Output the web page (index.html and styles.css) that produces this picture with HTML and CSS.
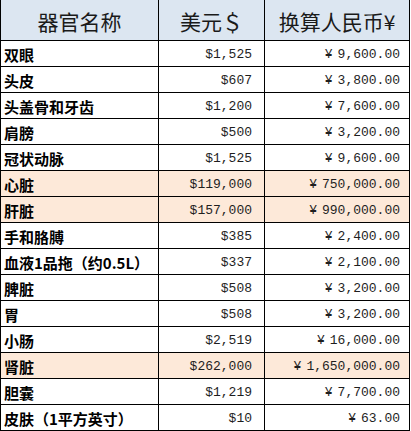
FILE: index.html
```html
<!DOCTYPE html>
<html lang="zh-CN">
<head>
<meta charset="utf-8">
<title>器官价格</title>
<link rel="stylesheet" href="styles.css">
</head>
<body>
<div class="sheet">
  <div class="row head">
    <div class="cell">器官名称</div>
    <div class="cell">美元＄</div>
    <div class="cell">换算人民币¥</div>
  </div>
  <div class="row"><div class="cell name">双眼</div><div class="cell usd">$1,525</div><div class="cell cny"><span class="yen">¥</span>9,600.00</div></div>
  <div class="row"><div class="cell name">头皮</div><div class="cell usd">$607</div><div class="cell cny"><span class="yen">¥</span>3,800.00</div></div>
  <div class="row"><div class="cell name">头盖骨和牙齿</div><div class="cell usd">$1,200</div><div class="cell cny"><span class="yen">¥</span>7,600.00</div></div>
  <div class="row"><div class="cell name">肩膀</div><div class="cell usd">$500</div><div class="cell cny"><span class="yen">¥</span>3,200.00</div></div>
  <div class="row"><div class="cell name">冠状动脉</div><div class="cell usd">$1,525</div><div class="cell cny"><span class="yen">¥</span>9,600.00</div></div>
  <div class="row hl"><div class="cell name">心脏</div><div class="cell usd">$119,000</div><div class="cell cny"><span class="yen">¥</span>750,000.00</div></div>
  <div class="row hl"><div class="cell name">肝脏</div><div class="cell usd">$157,000</div><div class="cell cny"><span class="yen">¥</span>990,000.00</div></div>
  <div class="row"><div class="cell name">手和胳膊</div><div class="cell usd">$385</div><div class="cell cny"><span class="yen">¥</span>2,400.00</div></div>
  <div class="row"><div class="cell name">血液1品拖（约0.5L）</div><div class="cell usd">$337</div><div class="cell cny"><span class="yen">¥</span>2,100.00</div></div>
  <div class="row"><div class="cell name">脾脏</div><div class="cell usd">$508</div><div class="cell cny"><span class="yen">¥</span>3,200.00</div></div>
  <div class="row"><div class="cell name">胃</div><div class="cell usd">$508</div><div class="cell cny"><span class="yen">¥</span>3,200.00</div></div>
  <div class="row"><div class="cell name">小肠</div><div class="cell usd">$2,519</div><div class="cell cny"><span class="yen">¥</span>16,000.00</div></div>
  <div class="row hl"><div class="cell name">肾脏</div><div class="cell usd">$262,000</div><div class="cell cny"><span class="yen">¥</span>1,650,000.00</div></div>
  <div class="row"><div class="cell name">胆囊</div><div class="cell usd">$1,219</div><div class="cell cny"><span class="yen">¥</span>7,700.00</div></div>
  <div class="row"><div class="cell name">皮肤（1平方英寸）</div><div class="cell usd">$10</div><div class="cell cny"><span class="yen">¥</span>63.00</div></div>
</div>
</body>
</html>
```

FILE: styles.css
```css
html, body {
  margin: 0;
  padding: 0;
  background: #ffffff;
}

.sheet {
  display: grid;
  grid-template-columns: 158px 106px 145px;
  width: max-content;
  border-left: 1px solid #000;
  font-family: "Noto Sans CJK SC", sans-serif;
  color: #111;
}

.row {
  display: contents;
}

.cell {
  box-sizing: border-box;
  height: 26px;
  border-right: 1px solid #000;
  border-bottom: 1px solid #000;
  display: flex;
  align-items: center;
  white-space: nowrap;
  overflow: hidden;
  background: #ffffff;
}

.head .cell {
  height: 41px;
  background: #dce6f1;
  justify-content: center;
  font-size: 21px;
  font-weight: 400;
  color: #1a1a1a;
  padding-top: 2px;
}

.hl .cell {
  background: #fde9d9;
}

.name {
  padding-left: 3px;
  padding-top: 2px;
  font-size: 15px;
  font-weight: 700;
  color: #000;
}

.usd,
.cny {
  justify-content: flex-end;
  font-family: "Liberation Mono", monospace;
  font-size: 13px;
  color: #1e1e1e;
  padding-top: 1px;
}

.usd {
  padding-right: 12px;
}

.cny {
  padding-right: 9px;
}

.yen {
  margin-right: 5px;
}
```
